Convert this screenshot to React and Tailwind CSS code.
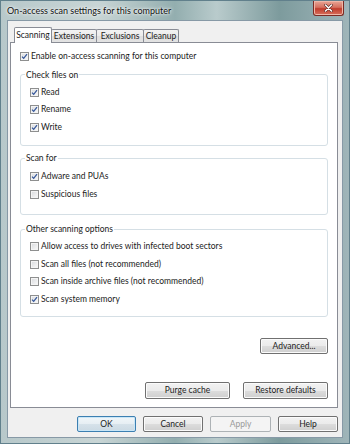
import React from 'react';

const Check = ({ checked }) => (
  <span className="flex h-[9px] w-[9px] shrink-0 items-center justify-center border border-[#8e8f8f] bg-[linear-gradient(135deg,#d7d9dc,#fbfbfb)] shadow-[inset_0_0_0_1px_#f4f4f4]">
    {checked && (
      <svg width="7" height="7" viewBox="0 0 7 7">
        <path d="M1 3.6 L2.7 5.4 L6 1.2" stroke="#34569a" strokeWidth="1.25" fill="none" />
      </svg>
    )}
  </span>
);

const Row = ({ checked, children }) => (
  <div className="flex h-[17.5px] items-center gap-[2px]">
    <Check checked={checked} />
    <span>{children}</span>
  </div>
);

const Group = ({ title, className, children }) => (
  <fieldset className={`mx-[9px] rounded-[3px] border border-[#d5dfe5] ${className}`}>
    <legend className="ml-[4px] px-[1px] leading-[12px]">{title}</legend>
    <div className="pl-[9px]">{children}</div>
  </fieldset>
);

const Btn = ({ children, className = '', kind }) => {
  const skin =
    kind === 'primary'
      ? 'border-[#3c7fb1] bg-[linear-gradient(#f1f6f9_0%,#e6eef3_50%,#d6e2ea_50%,#cbd9e3_100%)] shadow-[inset_0_0_0_1px_#c9e6f7]'
      : kind === 'disabled'
      ? 'border-[#adb2b5] bg-[#f4f4f4] text-[#9a9a9a]'
      : 'border-[#707070] bg-[linear-gradient(#f2f2f2_0%,#ebebeb_50%,#dddddd_50%,#cfcfcf_100%)] shadow-[inset_0_0_0_1px_#fbfbfb]';
  return (
    <div className={`flex items-center justify-center rounded-[2px] border ${skin} ${className}`}>
      {children}
    </div>
  );
};

const tabs = [
  { label: 'Scanning', w: 'w-[38px]', active: true },
  { label: 'Extensions', w: 'w-[46px]' },
  { label: 'Exclusions', w: 'w-[48px]' },
  { label: 'Cleanup', w: 'w-[36px]' },
];

export default function App() {
  return (
    <div className="flex h-[444px] w-[350px] flex-col overflow-hidden border border-[#61808c] bg-[linear-gradient(90deg,#b7c8ca_0%,#c8d5d5_28%,#93aeaf_50%,#b9cbcc_62%,#7d9b9d_80%,#9fb5b9_100%)] font-['Lato',sans-serif] text-[8.5px] text-[#1b1b1b]">
      {/* title bar */}
      <div className="flex h-[19px] shrink-0 items-start justify-between pl-[6px] pr-[5px]">
        <span className="mt-[3px] text-[9px] text-[#111] [text-shadow:0_0_4px_#ffffff,0_0_2px_#ffffff]">
          On-access scan settings for this computer
        </span>
        <div className="flex h-[15px] w-[31px] items-center justify-center rounded-b-[3px] border border-t-0 border-[#7b2b24] bg-[linear-gradient(#e9a797_0%,#d5705f_45%,#c03d2d_55%,#d7705c_100%)] shadow-[inset_0_0_0_1px_#efb7a8]">
          <svg width="9" height="8" viewBox="0 0 9 8">
            <path d="M1.5 1 L7.5 7 M7.5 1 L1.5 7" stroke="#5a2a24" strokeWidth="2.6" strokeLinecap="round" />
            <path d="M1.5 1 L7.5 7 M7.5 1 L1.5 7" stroke="#ffffff" strokeWidth="1.5" strokeLinecap="round" />
          </svg>
        </div>
      </div>

      {/* client area */}
      <div className="mx-[6px] mb-[5px] flex flex-1 flex-col border border-[#8799a6] bg-[#f0f0f0] pl-[2px] pr-[4px] pt-[6px]">
        <div className="flex h-[15px] items-end pl-[4px]">
          {tabs.map((t) =>
            t.active ? (
              <div
                key={t.label}
                className={`relative z-10 -mb-px flex h-[16px] ${t.w} items-start justify-center rounded-t-[2px] border border-b-0 border-[#898c95] bg-white pt-[1px]`}
              >
                {t.label}
              </div>
            ) : (
              <div
                key={t.label}
                className={`-ml-px flex h-[13px] ${t.w} items-center justify-center rounded-t-[2px] border border-b-0 border-[#898c95] bg-[linear-gradient(#f3f3f3_0%,#ebebeb_50%,#dedede_50%,#e3e3e3_100%)] first:ml-0`}
              >
                {t.label}
              </div>
            )
          )}
        </div>

        <div className="flex h-[366px] flex-col border border-[#898c95] bg-white">
          <div className="pl-[9px] pt-[5px]">
            <Row checked>Enable on-access scanning for this computer</Row>
          </div>

          <Group title="Check files on" className="mt-[3px] pb-[9px] pt-[3px]">
            <Row checked>Read</Row>
            <Row checked>Rename</Row>
            <Row checked>Write</Row>
          </Group>

          <Group title="Scan for" className="mt-[6px] pb-[11px] pt-[4px]">
            <Row checked>Adware and PUAs</Row>
            <Row>Suspicious files</Row>
          </Group>

          <Group title="Other scanning options" className="mt-[8px] pb-[8px] pt-[3px]">
            <Row>Allow access to drives with infected boot sectors</Row>
            <Row>Scan all files (not recommended)</Row>
            <Row>Scan inside archive files (not recommended)</Row>
            <Row checked>Scan system memory</Row>
          </Group>

          <div className="mr-[9px] mt-[21px] flex justify-end">
            <Btn className="h-[16px] w-[68px]">Advanced...</Btn>
          </div>

          <div className="mr-[9px] mt-[28px] flex justify-end gap-[13px]">
            <Btn className="h-[17px] w-[85px]">Purge cache</Btn>
            <Btn className="h-[17px] w-[85px]">Restore defaults</Btn>
          </div>
        </div>

        <div className="mt-[8px] flex justify-end gap-[7px]">
          <Btn kind="primary" className="h-[16px] w-[59px]">OK</Btn>
          <Btn className="h-[16px] w-[60px]">Cancel</Btn>
          <Btn kind="disabled" className="h-[16px] w-[61px]">Apply</Btn>
          <Btn className="h-[16px] w-[60px]">Help</Btn>
        </div>
      </div>
    </div>
  );
}
